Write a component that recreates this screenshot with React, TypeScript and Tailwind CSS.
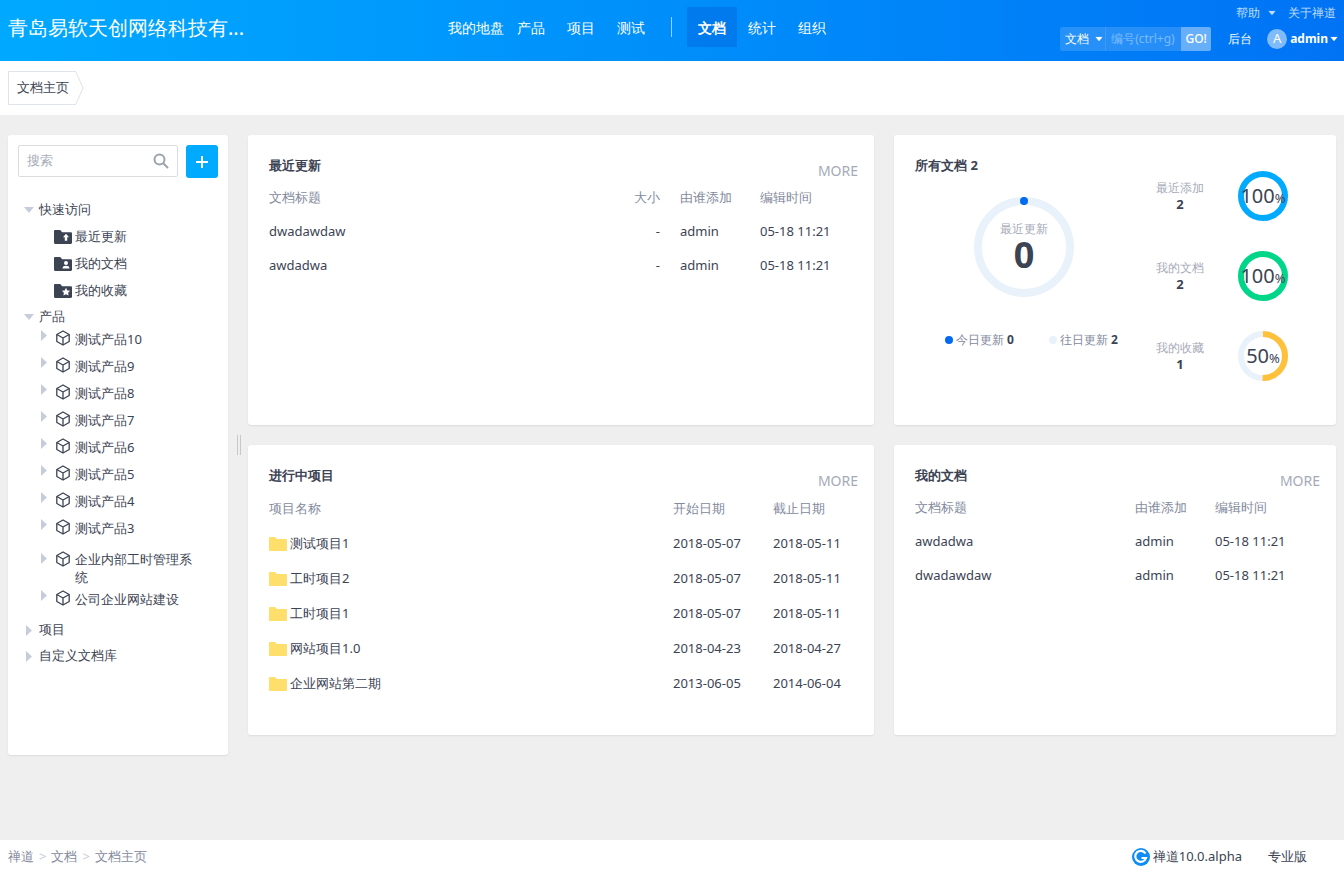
import React from "react";

const FONT = "font-['Liberation_Sans','Noto_Sans_CJK_SC',sans-serif]";

function Caret({ dir, className = "" }: { dir: "down" | "right"; className?: string }) {
  return dir === "down" ? (
    <svg width="10" height="6" viewBox="0 0 10 6" className={className}><path d="M0 0h10L5 6z" fill="currentColor" /></svg>
  ) : (
    <svg width="6" height="11" viewBox="0 0 6 11" className={className}><path d="M0 0l6 5.5L0 11z" fill="currentColor" /></svg>
  );
}

function FolderGlyph({ kind }: { kind: "up" | "user" | "star" }) {
  return (
    <svg width="18" height="14" viewBox="0 0 18 14" className="shrink-0">
      <path d="M0 1.2C0 .5.5 0 1.2 0h5l2 2.2h8.6c.7 0 1.2.5 1.2 1.2v9.4c0 .7-.5 1.2-1.2 1.2H1.2C.5 14 0 13.500 0 12.800z" fill="#3c4353" />
      {kind === "up" && <path d="M12 3.800l3 3.400h-1.800v3.600h-2.400V7.200H9z" fill="#fff" />}
      {kind === "user" && (
        <g fill="#fff"><circle cx="12" cy="6" r="2" /><path d="M8.500 11.500c0-2 1.500-2.700 3.500-2.700s3.500.7 3.500 2.700z" /></g>
      )}
      {kind === "star" && <path d="M12 3.800l1.300 2.600 2.800.4-2 2 .5 2.800-2.600-1.400-2.600 1.400.5-2.800-2-2 2.800-.4z" fill="#fff" />}
    </svg>
  );
}

function Cube() {
  return (
    <svg width="16" height="16" viewBox="0 0 16 16" fill="none" stroke="#3c4353" strokeWidth="1.300" strokeLinejoin="round" className="shrink-0">
      <path d="M8 1l6.200 3.500v7L8 15l-6.200-3.500v-7z" />
      <path d="M1.800 4.500L8 8l6.200-3.500M8 8v7" />
    </svg>
  );
}

function YellowFolder() {
  return (
    <svg width="18" height="14" viewBox="0 0 18 14" className="shrink-0">
      <path d="M0 1C0 .4.400 0 1 0h5l2 2h9c.6 0 1 .4 1 1v10c0 .6-.4 1-1 1H1c-.6 0-1-.4-1-1z" fill="#ffdf6b" />
    </svg>
  );
}

function Ring({ size, stroke, pct, color, track = "#e9f2fb", children }: { size: number; stroke: number; pct: number; color: string; track?: string; children?: React.ReactNode }) {
  const r = (size - stroke) / 2;
  const c = 2 * Math.PI * r;
  return (
    <div className="relative shrink-0" style={{ width: size, height: size }}>
      <svg width={size} height={size} className="-rotate-90">
        <circle cx={size / 2} cy={size / 2} r={r} fill="none" stroke={track} strokeWidth={stroke} />
        {pct > 0 && <circle cx={size / 2} cy={size / 2} r={r} fill="none" stroke={color} strokeWidth={stroke} strokeDasharray={`${(c * pct) / 100} ${c}`} />}
      </svg>
      <div className="absolute inset-0 flex items-center justify-center">{children}</div>
    </div>
  );
}

function Pct({ v }: { v: string }) {
  return (
    <span className="text-[20px] leading-none text-[#3c4353] whitespace-nowrap">
      {v}<span className="text-[13px]">%</span>
    </span>
  );
}

function Stat({ label, value, pct, color }: { label: string; value: string; pct: number; color: string }) {
  return (
    <div className="flex h-[50px] items-center">
      <div className="w-[76px] text-center">
        <div className="text-[12px] leading-[17px] text-[#a6aab8]">{label}</div>
        <div className="text-[13px] font-bold leading-[17px] text-[#3c4353]">{value}</div>
      </div>
      <div className="ml-[20px]">
        <Ring size={50} stroke={6} pct={pct} color={color}><Pct v={pct === 100 ? "100" : "50"} /></Ring>
      </div>
    </div>
  );
}

function Card({ title, more, children }: { title: React.ReactNode; more?: boolean; children?: React.ReactNode }) {
  return (
    <section className="relative h-[290px] rounded-[3px] bg-white px-[21px] shadow-[0_1px_2px_rgba(0,0,0,0.08)]">
      <div className="flex h-[46px] items-end justify-between pb-[6px]">
        <h2 className="text-[13px] font-bold leading-[20px] text-[#3c4353]">{title}</h2>
        {more && <span className="-mb-[6px] -mr-[5px] text-[14px] leading-[20px] text-[#a6aab8]">MORE</span>}
      </div>
      {children}
    </section>
  );
}

const treeText = "text-[13px] text-[#3c4353]";

function Section({ label, open }: { label: string; open?: boolean }) {
  return (
    <div className={`flex h-[26px] items-center pl-[16px] ${treeText}`}>
      <span className="flex w-[15px] justify-start text-[#c6ccd9]">
        {open ? <Caret dir="down" /> : <Caret dir="right" className="ml-[2px]" />}
      </span>
      {label}
    </div>
  );
}

function QuickItem({ kind, label }: { kind: "up" | "user" | "star"; label: string }) {
  return (
    <div className={`flex h-[27px] items-center gap-[3px] pl-[46px] ${treeText}`}>
      <FolderGlyph kind={kind} />
      {label}
    </div>
  );
}

function Product({ label }: { label: string }) {
  const long = label.length > 8;
  return (
    <div className={`flex items-start pl-[33px] ${treeText} ${long ? "py-[4px]" : "h-[27px] items-center"}`}>
      <Caret dir="right" className={`mr-[8px] shrink-0 text-[#c6ccd9] ${long ? "mt-[3px]" : ""}`} />
      <span className={`mr-[4px] ${long ? "mt-[1px]" : ""}`}><Cube /></span>
      <span className={long ? "w-[124px] leading-[18px]" : ""}>{label}</span>
    </div>
  );
}

const head = "text-[13px] text-[#838a9d]";
const cell = "text-[13px] text-[#3c4353]";

export default function App() {
  const products = ["测试产品10", "测试产品9", "测试产品8", "测试产品7", "测试产品6", "测试产品5", "测试产品4", "测试产品3"];
  const projects = [
    ["测试项目1", "2018-05-07", "2018-05-11"],
    ["工时项目2", "2018-05-07", "2018-05-11"],
    ["工时项目1", "2018-05-07", "2018-05-11"],
    ["网站项目1.0", "2018-04-23", "2018-04-27"],
    ["企业网站第二期", "2013-06-05", "2014-06-04"],
  ];
  return (
    <div className={`flex h-[874px] w-[1344px] flex-col overflow-hidden bg-[#efefef] ${FONT}`}>
      <header className="flex h-[61px] shrink-0 bg-gradient-to-r from-[#00a9ff] to-[#0073f5] text-white">
        <div className="w-[405px] shrink-0 pl-[8px] pt-[13px] text-[20px] leading-[30px]">青岛易软天创网络科技有...</div>
        <nav className="flex h-[40px] items-center pt-0 mt-[7px] text-[14px] font-medium">
          <span className="flex h-[40px] w-[70px] items-center justify-center ml-[36px]">我的地盘</span>
          <span className="flex h-[40px] w-[50px] items-center justify-center -ml-[5px]">产品</span>
          <span className="flex h-[40px] w-[50px] items-center justify-center">项目</span>
          <span className="flex h-[40px] w-[50px] items-center justify-center">测试</span>
          <span className="mx-[15px] h-[20px] w-px bg-white/60" />
          <span className="flex h-[40px] w-[50px] items-center justify-center bg-[#0069e0]/50 font-bold">文档</span>
          <span className="flex h-[40px] w-[50px] items-center justify-center">统计</span>
          <span className="flex h-[40px] w-[50px] items-center justify-center">组织</span>
        </nav>
        <div className="relative flex-1 text-[12px]">
          <div className="absolute right-[8px] top-[4px] flex items-center text-white/75 leading-[17px]">
            <span>帮助</span>
            <Caret dir="down" className="ml-[7px] scale-75" />
            <span className="ml-[11px]">关于禅道</span>
          </div>
          <div className="absolute right-0 top-[27px] flex h-[24px] items-center">
            <div className="flex h-[24px] w-[151px] items-center overflow-hidden rounded-[2px] bg-white/15">
              <span className="flex h-full w-[46px] items-center border-r border-white/10 pl-[5px]">
                文档<Caret dir="down" className="ml-[5px] scale-75" />
              </span>
              <span className="flex-1 pl-[5px] text-white/40">编号(ctrl+g)</span>
              <span className="flex h-full w-[30px] items-center justify-center bg-white/30 font-medium">GO!</span>
            </div>
            <span className="ml-[17px]">后台</span>
            <span className="ml-[15px] flex h-[20px] w-[20px] items-center justify-center rounded-full bg-white/50 text-[13px]">A</span>
            <span className="ml-[3px] font-bold">admin</span>
            <Caret dir="down" className="ml-[1px] mr-[5px] scale-75" />
          </div>
        </div>
      </header>

      <div className="flex h-[54px] shrink-0 items-center bg-white pl-[8px]">
        <div className="relative flex h-[34px] w-[68px] items-center justify-center border border-r-0 border-[#dfe3ec] text-[13px] text-[#3c4353]">
          文档主页
          <svg width="9" height="34" viewBox="0 0 9 34" className="absolute -right-[8px] -top-px"><path d="M.5 0L8 17 .5 34" fill="#fff" stroke="#dfe3ec" /></svg>
        </div>
      </div>

      <main className="flex flex-1 items-start gap-[20px] px-[8px] pt-[20px]">
        <aside className="relative h-[620px] w-[220px] shrink-0 rounded-[3px] bg-white shadow-[0_1px_2px_rgba(0,0,0,0.08)]">
          <div className="flex items-start px-[10px] pt-[10px]">
            <div className="flex h-[32px] w-[160px] items-center justify-between rounded-[2px] border border-[#dcdcdc] pl-[8px] pr-[8px] text-[13px] text-[#a6aab8]">
              搜索
              <svg width="16" height="16" viewBox="0 0 16 16" fill="none" stroke="#9ea2ad" strokeWidth="2"><circle cx="6.500" cy="6.500" r="5" /><path d="M10.500 10.500L15 15" /></svg>
            </div>
            <div className="ml-[8px] flex h-[33px] w-[32px] items-center justify-center rounded-[3px] bg-[#00aaff]">
              <svg width="14" height="14" viewBox="0 0 14 14" stroke="#fff" strokeWidth="2"><path d="M7 1v12M1 7h12" /></svg>
            </div>
          </div>
          <div className="mt-[19px]">
            <Section label="快速访问" open />
            <QuickItem kind="up" label="最近更新" />
            <QuickItem kind="user" label="我的文档" />
            <QuickItem kind="star" label="我的收藏" />
            <Section label="产品" open />
            {products.map((p) => <Product key={p} label={p} />)}
            <Product label="企业内部工时管理系统" />
            <Product label="公司企业网站建设" />
            <Section label="项目" />
            <Section label="自定义文档库" />
          </div>
          <div className="absolute -right-[13px] top-[300px] h-[20px] w-[4px] border-x border-[#c8c8c8]" />
        </aside>

        <div className="grid w-[1088px] grid-cols-[626px_442px] gap-[20px]">
          <Card title="最近更新" more>
            <div className="grid grid-cols-[1fr_52px_28px_52px_28px_85px] items-center auto-rows-[34px]">
              <span className={`${head} col-span-1`}>文档标题</span>
              <span className={`${head} text-right`}>大小</span>
              <span />
              <span className={`${head} whitespace-nowrap col-span-2 -ml-[8px]`}>由谁添加</span>
              <span className={`${head} -ml-[8px]`}>编辑时间</span>
              <span className={cell}>dwadawdaw</span>
              <span className={`${cell} text-right`}>-</span>
              <span />
              <span className={`${cell} col-span-2 -ml-[8px]`}>admin</span>
              <span className={`${cell} -ml-[8px] whitespace-nowrap`}>05-18 11:21</span>
              <span className={cell}>awdadwa</span>
              <span className={`${cell} text-right`}>-</span>
              <span />
              <span className={`${cell} col-span-2 -ml-[8px]`}>admin</span>
              <span className={`${cell} -ml-[8px] whitespace-nowrap`}>05-18 11:21</span>
            </div>
          </Card>

          <Card title="所有文档 2">
            <div className="flex">
              <div className="w-[234px]">
                <div className="mt-[16px] flex justify-center -translate-x-[8px]">
                  <Ring size={100} stroke={8} pct={0} color="#006af1">
                    <div className="text-center">
                      <div className="text-[12px] leading-[16px] text-[#a6aab8]">最近更新</div>
                      <div className="text-[36px] font-bold leading-[36px] text-[#3c4353]">0</div>
                    </div>
                    <span className="absolute left-[46px] top-0 h-[8px] w-[8px] rounded-full bg-[#006af1]" />
                  </Ring>
                </div>
                <div className="mt-[35px] flex text-[12px] leading-[16px] text-[#838a9d]">
                  <span className="ml-[30px] flex items-center gap-[3px]"><i className="h-[8px] w-[8px] rounded-full bg-[#006af1]" />今日更新 <b className="text-[#3c4353]">0</b></span>
                  <span className="ml-[35px] flex items-center gap-[3px]"><i className="h-[8px] w-[8px] rounded-full bg-[#e9f2fb]" />往日更新 <b className="text-[#3c4353]">2</b></span>
                </div>
              </div>
              <div className="-mt-[10px] ml-[-7px] flex flex-col gap-[30px]">
                <Stat label="最近添加" value="2" pct={100} color="#00aaff" />
                <Stat label="我的文档" value="2" pct={100} color="#00d68a" />
                <Stat label="我的收藏" value="1" pct={50} color="#ffc13b" />
              </div>
            </div>
          </Card>

          <Card title="进行中项目" more>
            <div className="grid grid-cols-[404px_100px_1fr] items-center auto-rows-[35px]">
              <span className={head}>项目名称</span>
              <span className={head}>开始日期</span>
              <span className={head}>截止日期</span>
              {projects.map((p) => (
                <React.Fragment key={p[0]}>
                  <span className={`flex items-center gap-[3px] ${cell}`}><YellowFolder />{p[0]}</span>
                  <span className={cell}>{p[1]}</span>
                  <span className={cell}>{p[2]}</span>
                </React.Fragment>
              ))}
            </div>
          </Card>

          <Card title="我的文档" more>
            <div className="grid grid-cols-[220px_80px_1fr] items-center auto-rows-[34px]">
              <span className={head}>文档标题</span>
              <span className={head}>由谁添加</span>
              <span className={head}>编辑时间</span>
              <span className={cell}>awdadwa</span>
              <span className={cell}>admin</span>
              <span className={cell}>05-18 11:21</span>
              <span className={cell}>dwadawdaw</span>
              <span className={cell}>admin</span>
              <span className={cell}>05-18 11:21</span>
            </div>
          </Card>
        </div>
      </main>

      <footer className="flex h-[34px] shrink-0 items-center justify-between bg-white pl-[8px] pr-[37px] text-[13px] text-[#838a9d]">
        <div className="flex items-center">
          禅道<span className="mx-[5px] text-[#c6ccd9]">&gt;</span>文档<span className="mx-[5px] text-[#c6ccd9]">&gt;</span>文档主页
        </div>
        <div className="flex items-center text-[#3c4353]">
          <svg width="18" height="18" viewBox="0 0 18 18" className="mr-[3px]">
            <circle cx="9" cy="9" r="9" fill="#0f8cf5" />
            <path d="M13.500 5.500A5.500 5.500 0 1 0 14 10H9.500" fill="none" stroke="#fff" strokeWidth="2.200" />
          </svg>
          禅道10.0.alpha
          <span className="ml-[26px]">专业版</span>
        </div>
      </footer>
    </div>
  );
}
